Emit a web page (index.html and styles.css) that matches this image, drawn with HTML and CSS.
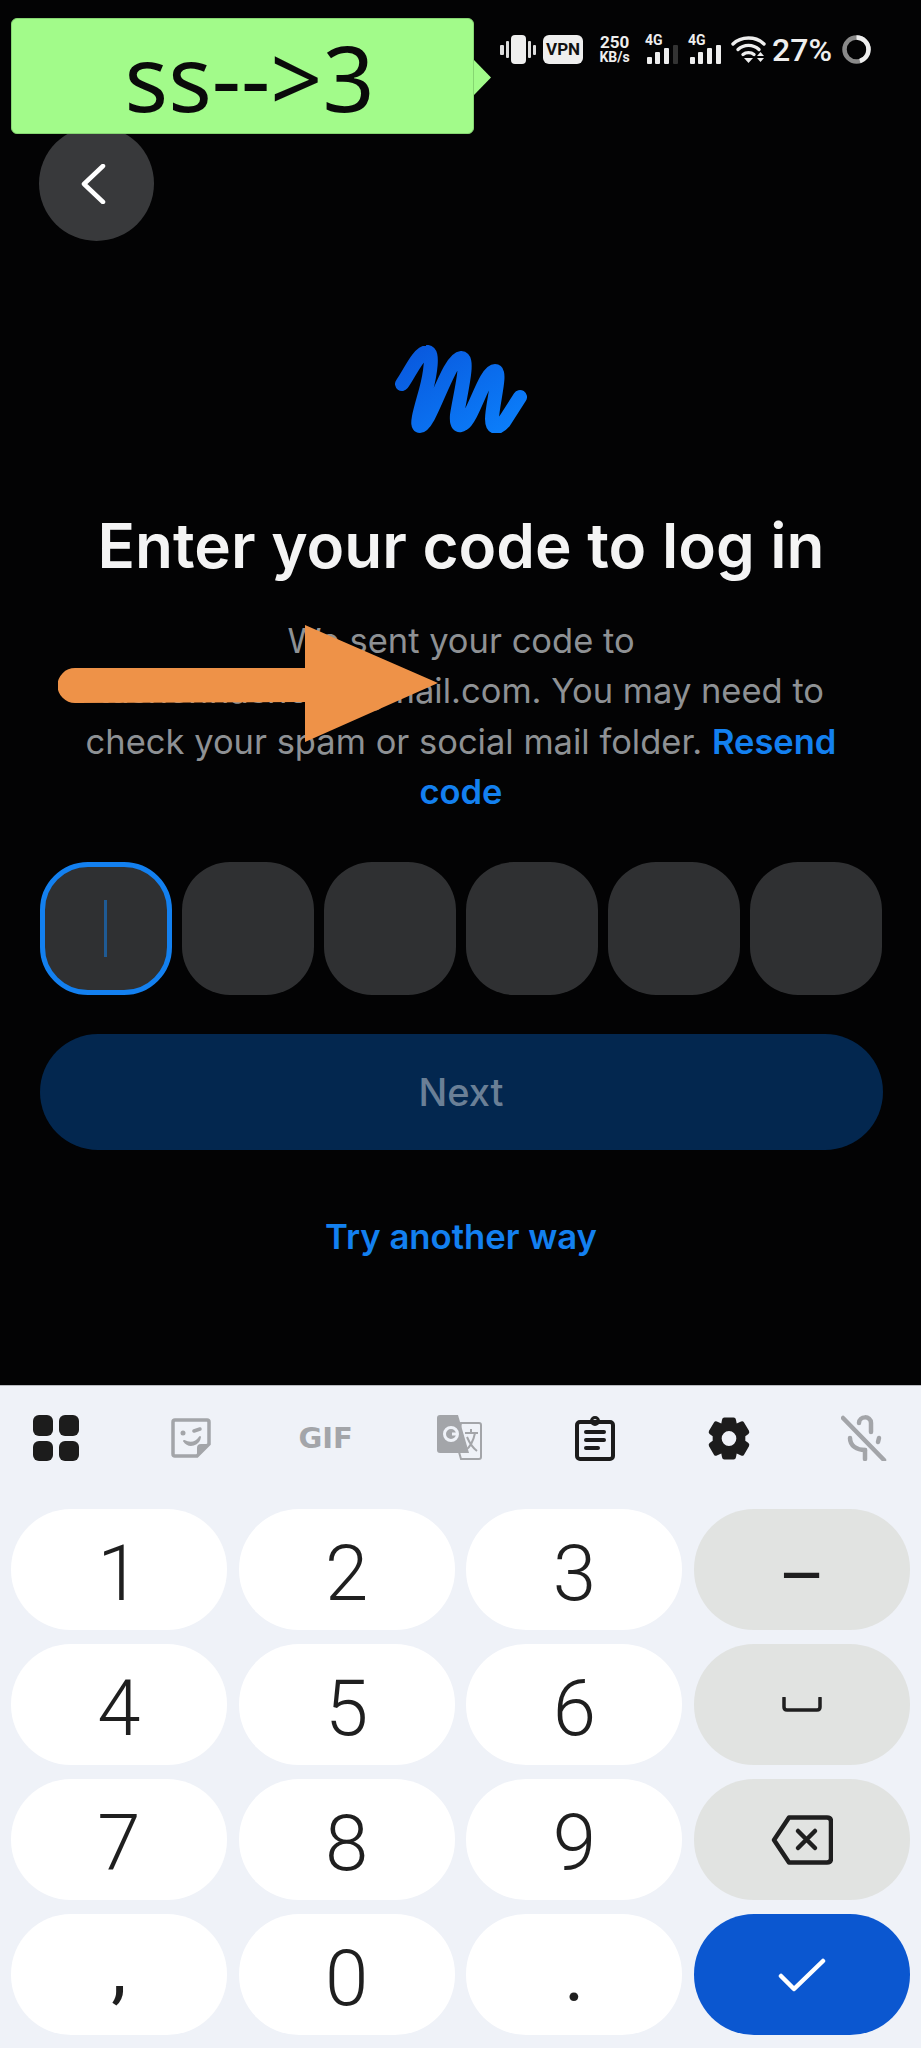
FILE: index.html
```html
<!DOCTYPE html>
<html lang="en">
<head>
    <meta charset="UTF-8">
    <meta name="viewport" content="width=device-width, initial-scale=1.0">
    <title>Enter your code</title>
    <link rel="stylesheet" href="styles.css">
</head>
<body>
    <div class="page">
        <div class="content">
            <div class="status-bar">
                <svg class="icon-vibrate" width="36" height="29" viewBox="0 0 36 29">
                    <rect x="11" y="0" width="15" height="29" rx="4" fill="#eee"/>
                    <rect x="0" y="10" width="4" height="10" rx="1" fill="#ddd"/>
                    <rect x="6" y="6" width="3" height="17" rx="1" fill="#ddd"/>
                    <rect x="28" y="6" width="3" height="17" rx="1" fill="#ddd"/>
                    <rect x="33" y="10" width="3" height="10" rx="1" fill="#ddd"/>
                </svg>
                <span class="vpn">VPN</span>
                <span class="speed"><b>250</b><small>KB/s</small></span>
                <div class="signal">
                    <span>4G</span>
                    <svg width="33" height="19" viewBox="0 0 33 19">
                        <rect x="2" y="12" width="5" height="7" rx="1" fill="#eee"/>
                        <rect x="10" y="7" width="5" height="12" rx="1" fill="#eee"/>
                        <rect x="19" y="3" width="5" height="16" rx="1" fill="#eee"/>
                        <rect x="28" y="0" width="5" height="19" rx="1" fill="#333"/>
                    </svg>
                </div>
                <div class="signal">
                    <span>4G</span>
                    <svg width="33" height="19" viewBox="0 0 33 19">
                        <rect x="2" y="12" width="5" height="7" rx="1" fill="#eee"/>
                        <rect x="10" y="7" width="5" height="12" rx="1" fill="#eee"/>
                        <rect x="19" y="3" width="5" height="16" rx="1" fill="#eee"/>
                        <rect x="28" y="0" width="5" height="19" rx="1" fill="#eee"/>
                    </svg>
                </div>
                <svg width="35" height="27" viewBox="0 0 35 27">
                    <path d="M2 8 C10 0 25 0 33 8" fill="none" stroke="#eee" stroke-width="3.4" stroke-linecap="round"/>
                    <path d="M7 13.5 C13 8 22 8 28 13.5" fill="none" stroke="#eee" stroke-width="3.4" stroke-linecap="round"/>
                    <path d="M12 18.5 C15 16 20 16 23 18.5" fill="none" stroke="#eee" stroke-width="3.4" stroke-linecap="round"/>
                    <path d="M13 22 H22 L17.5 27 Z" fill="#eee"/>
                    <path d="M26 20 L29.5 16 L33 20 Z M26 22 H33 L29.5 26 Z" fill="#eee"/>
                </svg>
                <span class="battery-text">27%</span>
                <svg width="29" height="29" viewBox="0 0 29 29">
                    <circle cx="14.5" cy="14.5" r="12" fill="none" stroke="#8a8a8a" stroke-width="4.500"/>
                    <circle cx="14.5" cy="14.5" r="12" fill="none" stroke="#eee" stroke-width="4.500" stroke-dasharray="34 76" transform="rotate(-90 14.5 14.5)"/>
                </svg>
            </div>

            <button class="back-btn">
                <svg width="26" height="40" viewBox="0 0 26 40">
                    <path d="M23 2 L4 20 L23 38" fill="none" stroke="#fff" stroke-width="4.5" stroke-linecap="round" stroke-linejoin="round"/>
                </svg>
            </button>

            <svg class="logo" width="132" height="88" viewBox="15 10 132 88">
                <defs>
                    <linearGradient id="logoFill" x1="0" y1="0" x2="1" y2="1">
                        <stop offset="0" stop-color="#0958dd"/>
                        <stop offset="1" stop-color="#0b7ffb"/>
                    </linearGradient>
                </defs>
                <path d="M22 49 C30 38 38 18 47 17 C54 16 50 40 46 55 C42 70 35 91 40 91 C50 91 68 24 81 23 C90 22 80 60 77 80 C76 90 79 92 83 89 C93 83 105 36 115 36 C122 36 112 70 112 84 C112 94 118 94 124 87 L140 62" fill="none" stroke="url(#logoFill)" stroke-width="14" stroke-linecap="round" stroke-linejoin="round"/>
            </svg>

            <h1>Enter your code to log in</h1>
            <p class="sub">We sent your code to<br>tusher.hasn66@gmail.com. You may need to<br>check your spam or social mail folder. <a href="#">Resend</a><br><a href="#">code</a></p>

            <div class="code-row">
                <div class="code-box active"><i></i></div>
                <div class="code-box"></div>
                <div class="code-box"></div>
                <div class="code-box"></div>
                <div class="code-box"></div>
                <div class="code-box"></div>
            </div>

            <button class="next-btn">Next</button>
            <a class="try-link" href="#">Try another way</a>
        </div>

        <div class="keyboard">
            <div class="toolbar">
                <svg width="46" height="46" viewBox="0 0 46 46">
                    <rect x="0" y="0" width="20" height="21" rx="6" fill="#1c1c1c"/>
                    <rect x="26" y="0" width="20" height="21" rx="6" fill="#1c1c1c"/>
                    <rect x="0" y="26" width="20" height="20" rx="6" fill="#1c1c1c"/>
                    <rect x="26" y="26" width="20" height="20" rx="6" fill="#1c1c1c"/>
                </svg>
                <svg width="40" height="40" viewBox="0 0 40 40">
                    <path d="M4 2 H36 Q38 2 38 4 V26 L26 38 H4 Q2 38 2 36 V4 Q2 2 4 2 Z" fill="none" stroke="#a3a5a9" stroke-width="3.5"/>
                    <path d="M38 26 H30 Q26 26 26 30 V38 Z" fill="#a3a5a9"/>
                    <circle cx="12" cy="15" r="2.5" fill="#a3a5a9"/>
                    <path d="M23 13 L29 11" stroke="#a3a5a9" stroke-width="3.5" stroke-linecap="round"/>
                    <path d="M13 23 C19 26 25 25 29 19 C28 27 18 30 13 23 Z" fill="#a3a5a9" stroke="#a3a5a9" stroke-width="2" stroke-linejoin="round"/>
                </svg>
                <span class="gif">GIF</span>
                <svg width="46" height="46" viewBox="0 0 46 46">
                    <path d="M24 8 H42 Q44 8 44 10 V42 Q44 44 42 44 H24 L20 30 Z" fill="none" stroke="#a3a5a9" stroke-width="2"/>
                    <path d="M3 0 H21 L32 38 H3 Q0 38 0 35 V3 Q0 0 3 0 Z" fill="#a3a5a9"/>
                    <circle cx="14" cy="19" r="6.5" fill="none" stroke="#eff2f8" stroke-width="3"/>
                    <path d="M15 19 H21" stroke="#eff2f8" stroke-width="3"/>
                    <path d="M28 18 H41 M34 14 V18 M38 18 C36 28 32 33 28 36 M30 22 C33 29 36 33 40 36" fill="none" stroke="#a3a5a9" stroke-width="2"/>
                </svg>
                <svg width="40" height="45" viewBox="0 0 40 45">
                    <rect x="2" y="6" width="36" height="37" rx="3" fill="none" stroke="#1c1c1c" stroke-width="4"/>
                    <circle cx="20" cy="5" r="3.5" fill="none" stroke="#1c1c1c" stroke-width="3"/>
                    <path d="M11 16 H29 M11 24 H29 M11 32 H23" stroke="#1c1c1c" stroke-width="4" stroke-linecap="round"/>
                </svg>
                <svg width="44" height="45" viewBox="0 0 24 24" preserveAspectRatio="none">
                    <path fill-rule="evenodd" d="M9.5 0.8 H14.5 Q15.6 0.8 15.8 2 L16.2 4 L18.6 2.9 Q19.6 2.5 20.2 3.4 L22.9 7.9 Q23.4 8.9 22.6 9.6 L20.9 10.8 V13.2 L22.6 14.4 Q23.4 15.1 22.9 16.1 L20.2 20.6 Q19.6 21.5 18.6 21.1 L16.2 20 L15.8 22 Q15.6 23.2 14.5 23.2 H9.5 Q8.4 23.2 8.2 22 L7.8 20 L5.4 21.1 Q4.4 21.5 3.8 20.6 L1.1 16.1 Q0.6 15.1 1.4 14.4 L3.1 13.2 V10.8 L1.4 9.6 Q0.6 8.9 1.1 7.9 L3.8 3.4 Q4.4 2.5 5.4 2.9 L7.8 4 L8.2 2 Q8.4 0.8 9.5 0.8 Z M12 8 A4 4 0 1 0 12 16 A4 4 0 1 0 12 8 Z" fill="#1c1c1c"/>
                </svg>
                <svg width="46" height="46" viewBox="0 0 46 46">
                    <path d="M2 3 L43 45" stroke="#a3a5a9" stroke-width="4.5" stroke-linecap="round"/>
                    <path d="M18 8 C18 1 30 0 30 8 V17" fill="none" stroke="#a3a5a9" stroke-width="4.5" stroke-linecap="round"/>
                    <path d="M9 23 C9 31 16 35 24 35 M38 23 L37 27" fill="none" stroke="#a3a5a9" stroke-width="4.5" stroke-linecap="round"/>
                    <path d="M24 35 V44" stroke="#a3a5a9" stroke-width="4.5" stroke-linecap="round"/>
                </svg>
            </div>
            <div class="keys">
                <button class="key">1</button>
                <button class="key">2</button>
                <button class="key">3</button>
                <button class="key side dash">–</button>
                <button class="key">4</button>
                <button class="key">5</button>
                <button class="key">6</button>
                <button class="key side icon-key">
                    <svg width="40" height="15" viewBox="0 0 40 15">
                        <path d="M2 1 V10 Q2 13 5 13 H35 Q38 13 38 10 V1" fill="none" stroke="#1f1f1f" stroke-width="3.5" stroke-linecap="round"/>
                    </svg>
                </button>
                <button class="key">7</button>
                <button class="key">8</button>
                <button class="key">9</button>
                <button class="key side icon-key">
                    <svg width="62" height="50" viewBox="0 0 62 50">
                        <path d="M18 2.500 H56 Q60 2.500 60 6.500 V43.500 Q60 47.500 56 47.500 H18 L3 25 Z" fill="none" stroke="#1f1f1f" stroke-width="4.5" stroke-linejoin="round"/>
                        <path d="M27 16 L44 33 M44 16 L27 33" stroke="#1f1f1f" stroke-width="4.5" stroke-linecap="round"/>
                    </svg>
                </button>
                <button class="key comma">,</button>
                <button class="key">0</button>
                <button class="key dot">.</button>
                <button class="key icon-key done">
                    <svg width="48" height="34" viewBox="0 0 48 34">
                        <path d="M3 18 L16 31 L45 3" fill="none" stroke="#fff" stroke-width="4.5" stroke-linecap="round" stroke-linejoin="round"/>
                    </svg>
                </button>
            </div>
        </div>

        <!-- marks that were drawn on the screenshot -->
        <div class="tag">ss--&gt;3</div>
        <svg class="arrow" width="382" height="118" viewBox="0 0 382 118">
            <path d="M17 43 H247 V0 L380 58 L247 117 V77 L17 78 A17 17 0 0 1 17 43 Z" fill="#ee9248"/>
        </svg>
    </div>
</body>
</html>
```

FILE: styles.css
```css
* {
    box-sizing: border-box;
}

body {
    margin: 0;
    padding: 0;
    background-color: #000;
    font-family: Inter, "Liberation Sans", sans-serif;
}

button {
    border: none;
    padding: 0;
    font-family: inherit;
}

.page {
    position: relative;
    width: 921px;
    height: 2048px;
    overflow: hidden;
    display: flex;
    flex-direction: column;
}

.content {
    flex: 1;
    display: flex;
    flex-direction: column;
    align-items: center;
    padding: 35px 38px 0 39px;
    background-color: #030304;
}

/* status bar */
.status-bar {
    align-self: flex-end;
    display: flex;
    align-items: center;
    gap: 7px;
    height: 29px;
    margin-right: 12px;
    color: #eee;
    font-family: Roboto, sans-serif;
}

.vpn {
    width: 40px;
    height: 29px;
    line-height: 29px;
    text-align: center;
    background-color: #eee;
    border-radius: 6px;
    color: #111;
    font-size: 17px;
    font-weight: 700;
}

.speed {
    display: flex;
    flex-direction: column;
    align-items: center;
    width: 33px;
    margin-left: 8px;
    margin-right: 7px;
    line-height: 15px;
}

.speed b {
    font-size: 17px;
    font-weight: 700;
}

.speed small {
    font-size: 14px;
    font-weight: 700;
}

.signal {
    display: flex;
    flex-direction: column;
    width: 33px;
    margin-right: 3px;
    font-size: 14px;
    font-weight: 700;
    line-height: 10px;
}

.battery-text {
    font-size: 32px;
    font-weight: 500;
    margin-left: -1px;
    margin-right: 3px;
}

/* main content */
.back-btn {
    align-self: flex-start;
    display: flex;
    align-items: center;
    justify-content: center;
    width: 115px;
    height: 115px;
    margin-top: 62px;
    padding-right: 8px;
    background-color: #38393b;
    border-radius: 50%;
}

.logo {
    display: block;
    margin-top: 104px;
}

h1 {
    margin: 77px 0 0;
    color: #f4f4f4;
    font-size: 62px;
    line-height: 72px;
    font-weight: 600;
    white-space: nowrap;
}

.sub {
    margin: 34px 0 0;
    color: #8e9194;
    font-size: 34.500px;
    line-height: 50.300px;
    text-align: center;
    width: 800px;
}

.sub a {
    color: #1380f0;
    font-weight: 600;
    text-decoration: none;
}

.code-row {
    display: flex;
    justify-content: space-between;
    width: 843px;
    margin-top: 45px;
}

.code-box {
    display: flex;
    align-items: center;
    justify-content: center;
    width: 132px;
    height: 133px;
    background-color: #2f3032;
    border-radius: 48px;
}

.code-box.active {
    border: 5px solid #1380f0;
}

.code-box i {
    width: 3px;
    height: 57px;
    background-color: #1f5a94;
}

.next-btn {
    width: 843px;
    height: 116px;
    margin-top: 39px;
    background-color: #03274f;
    border-radius: 58px;
    color: #6a7f96;
    font-size: 38px;
    font-weight: 500;
}

.try-link {
    margin-top: 65px;
    color: #1380f0;
    font-size: 34.700px;
    line-height: 42px;
    font-weight: 600;
    text-decoration: none;
}

/* keyboard */
.keyboard {
    height: 663px;
    background-color: #eff2f8;
    border-top: 1px solid #b9bbc0;
}

.toolbar {
    display: grid;
    grid-template-columns: repeat(7, 134.700px);
    align-items: center;
    justify-items: center;
    height: 104px;
    margin-left: -11.300px;
    margin-bottom: 19px;
}

.gif {
    width: 54px;
    color: #a3a5a9;
    font-family: "DejaVu Sans", sans-serif;
    font-size: 29px;
    font-weight: 700;
    text-align: center;
}

.keys {
    display: grid;
    grid-template-columns: repeat(4, 216px);
    grid-auto-rows: 121px;
    column-gap: 11.670px;
    row-gap: 14px;
    padding: 0 11px;
}

.key {
    display: flex;
    align-items: center;
    justify-content: center;
    padding-top: 8px;
    background-color: #fff;
    border-radius: 60px;
    color: #1f1f1f;
    font-family: Roboto, sans-serif;
    font-size: 78px;
    font-weight: 350;
}

.key.side {
    background-color: #e1e3e1;
}

.key.icon-key {
    padding-top: 0;
}

.key.dash {
    padding-top: 13px;
    font-size: 72px;
    font-weight: 400;
}

.key.comma {
    padding-top: 0;
    padding-bottom: 15px;
    font-size: 78px;
    font-weight: 400;
}

.key.dot {
    padding-top: 0;
    font-weight: 400;
}

.key.done {
    background-color: #0b57d0;
}

/* annotations on top of the screenshot */
.tag {
    position: absolute;
    left: 11px;
    top: 18px;
    width: 463px;
    height: 116px;
    padding-left: 14px;
    padding-top: 3px;
    background-color: #a2fb8a;
    border: 1px solid #86d672;
    border-radius: 6px;
    color: #0a0a0a;
    font-family: "Noto Sans", sans-serif;
    font-size: 91px;
    line-height: 110px;
    text-align: center;
}

.tag::after {
    content: "";
    position: absolute;
    left: 462px;
    top: 41px;
    width: 17px;
    height: 35px;
    background-color: #a2fb8a;
    clip-path: polygon(0 0, 100% 50%, 0 100%);
}

.arrow {
    position: absolute;
    left: 58px;
    top: 625px;
}
```
